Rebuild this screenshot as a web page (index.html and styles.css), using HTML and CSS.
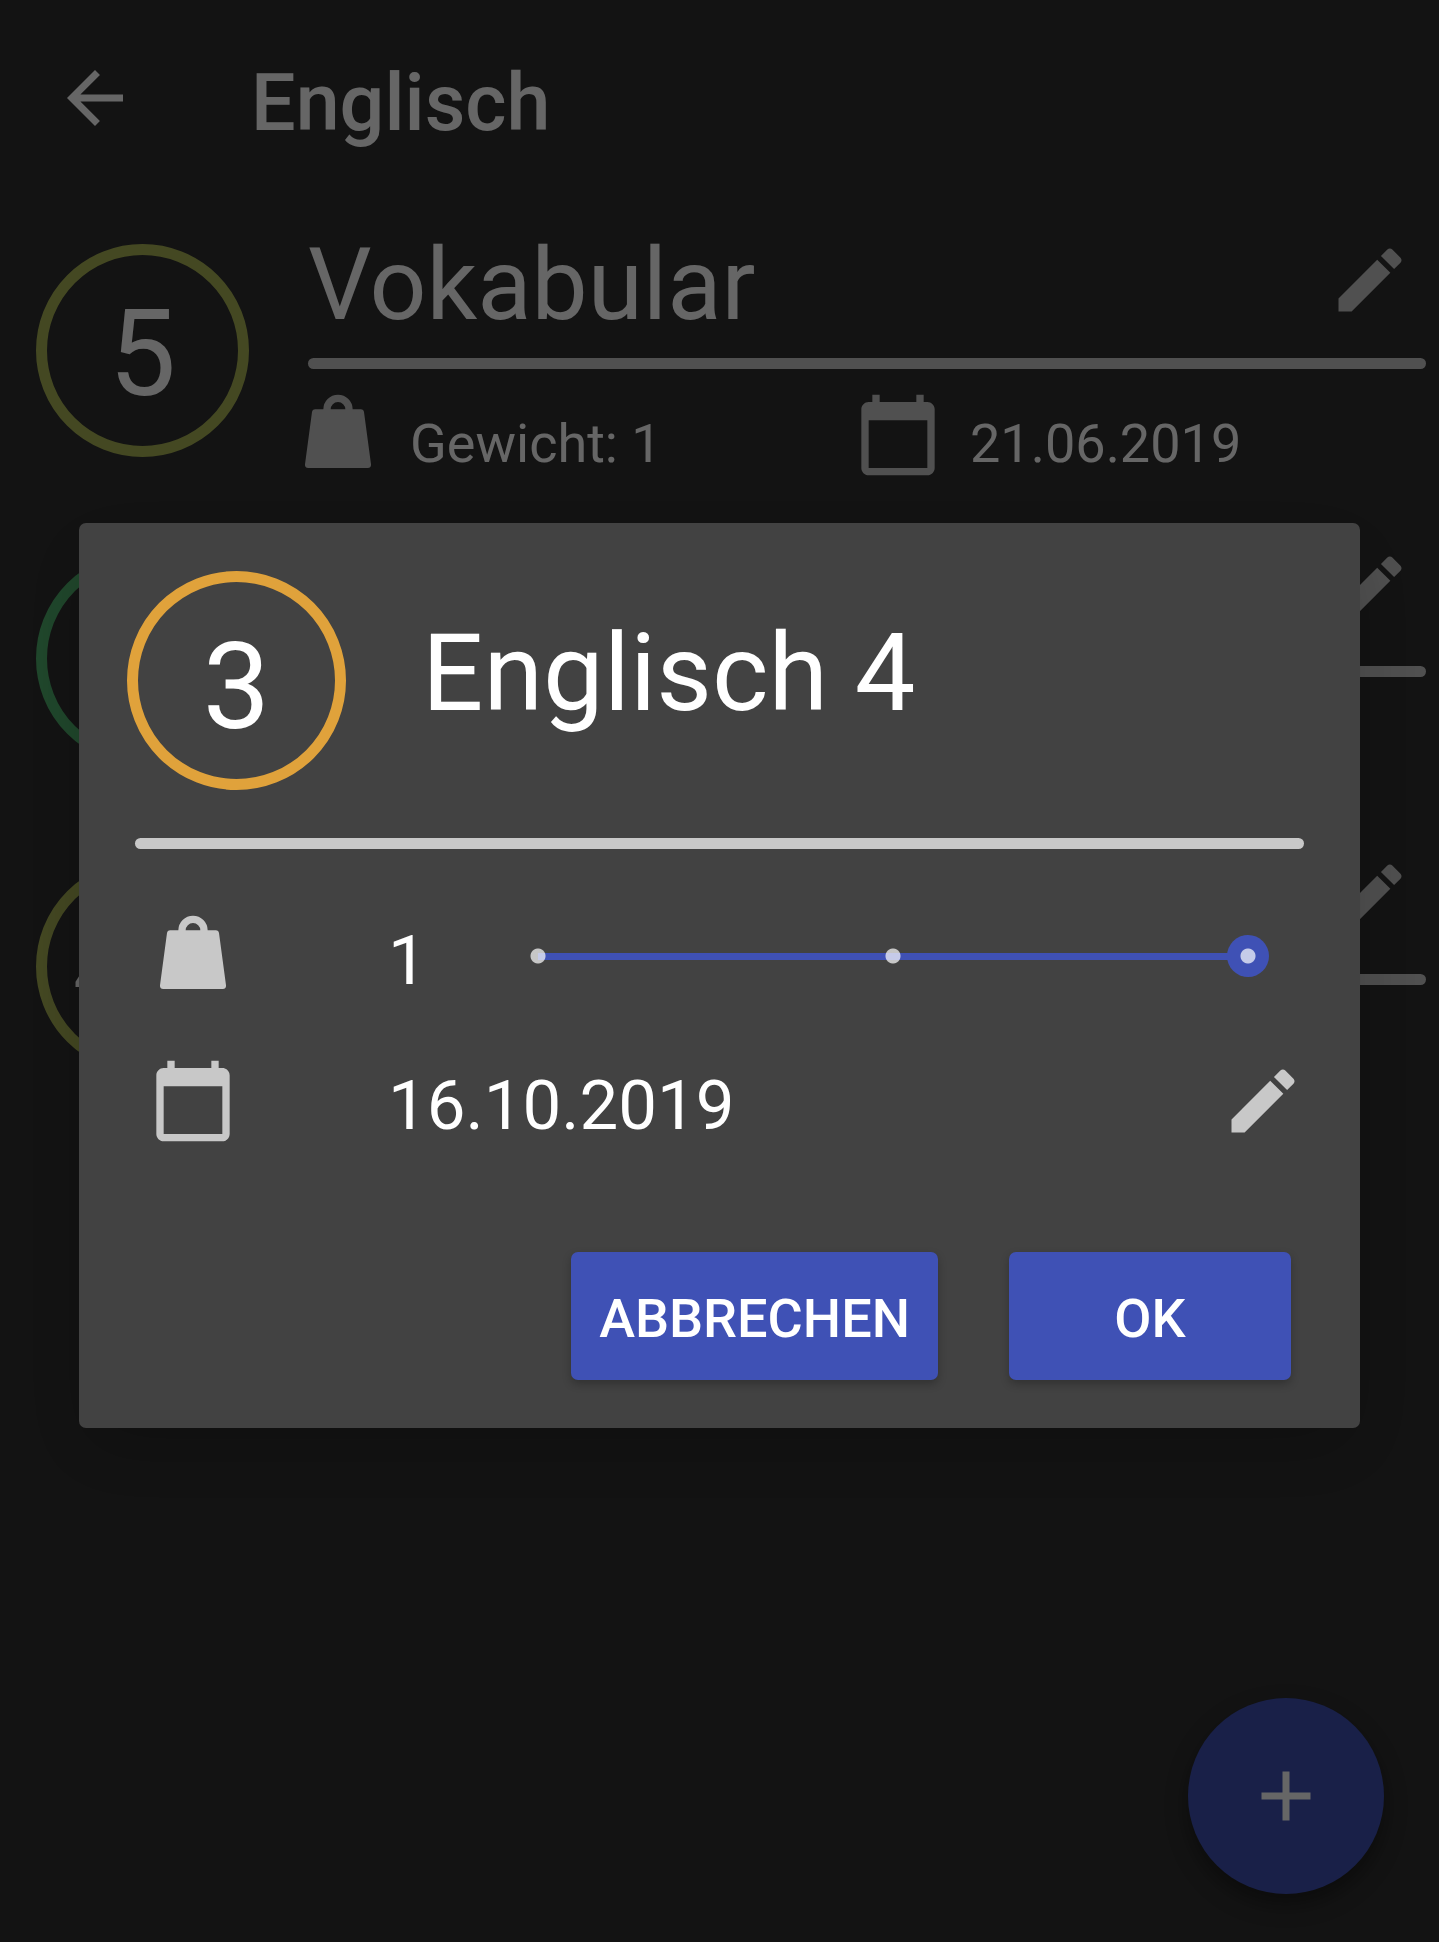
FILE: index.html
```html
<!DOCTYPE html>
<html lang="de">
<head>
<meta charset="utf-8">
<meta name="viewport" content="width=device-width, initial-scale=1">
<title>Englisch</title>
<link rel="stylesheet" href="styles.css">
</head>
<body>
<svg class="sprite" aria-hidden="true">
  <symbol id="pencil" viewBox="0 0 24 24"><path d="M3 17.25V21h3.75L17.81 9.94l-3.75-3.75L3 17.25zM20.71 7.04c.39-.39.39-1.02 0-1.41l-2.34-2.34c-.39-.39-1.02-.39-1.41 0l-1.83 1.83 3.75 3.75 1.83-1.83z"/></symbol>
  <symbol id="weight" viewBox="0 0 24 24"><path fill-rule="evenodd" d="M8 5a4 4 0 0 1 8 0h2.2q.8 0 .9.8L21 20q.1 1-.9 1H3.9Q2.900 21 3 20L4.900 5.800q.1-.8.9-.8zM10 5h4a2 2 0 0 0-4 0z"/></symbol>
  <symbol id="calendar" viewBox="0 0 24 24"><path d="M20 3h-1V1h-2v2H7V1H5v2H4c-1.100 0-2 .9-2 2v16c0 1.100.9 2 2 2h16c1.100 0 2-.9 2-2V5c0-1.100-.9-2-2-2zm0 18H4V8h16v13z"/></symbol>
</svg>

<header class="appbar">
  <button class="icon-button" type="button" aria-label="Zurück">
    <svg class="icon icon-white" viewBox="0 0 24 24"><path d="M20 11H7.830l5.590-5.590L12 4l-8 8 8 8 1.410-1.410L7.830 13H20v-2z"/></svg>
  </button>
  <h1 class="appbar-title">Englisch</h1>
</header>

<main class="grades">
  <article class="grade-row">
    <div class="grade grade-good">5</div>
    <div class="grade-body">
      <div class="grade-head">
        <h2 class="grade-title">Vokabular</h2>
        <button class="icon-button" type="button" aria-label="Bearbeiten"><svg class="icon"><use href="#pencil"/></svg></button>
      </div>
      <hr class="rule">
      <div class="grade-meta">
        <div class="meta"><svg class="icon icon-large"><use href="#weight"/></svg><span>Gewicht: 1</span></div>
        <div class="meta"><svg class="icon icon-large"><use href="#calendar"/></svg><span>21.06.2019</span></div>
      </div>
    </div>
  </article>
  <article class="grade-row">
    <div class="grade grade-top"></div>
    <div class="grade-body">
      <div class="grade-head">
        <h2 class="grade-title"></h2>
        <button class="icon-button" type="button" aria-label="Bearbeiten"><svg class="icon"><use href="#pencil"/></svg></button>
      </div>
      <hr class="rule">
    </div>
  </article>
  <article class="grade-row">
    <div class="grade grade-good grade-decimal">4.5</div>
    <div class="grade-body">
      <div class="grade-head">
        <h2 class="grade-title"></h2>
        <button class="icon-button" type="button" aria-label="Bearbeiten"><svg class="icon"><use href="#pencil"/></svg></button>
      </div>
      <hr class="rule">
    </div>
  </article>
</main>

<button class="fab" type="button" aria-label="Hinzufügen">
  <svg class="icon icon-white" viewBox="0 0 24 24"><path d="M19 13h-6v6h-2v-6H5v-2h6V5h2v6h6v2z"/></svg>
</button>

<div class="scrim">
  <form class="dialog" role="dialog" aria-labelledby="dialog-title">
    <div class="dialog-head">
      <div class="grade grade-dialog">3</div>
      <h2 class="dialog-title" id="dialog-title">Englisch 4</h2>
    </div>
    <hr class="rule dialog-rule">
    <div class="fields">
      <div class="field">
        <svg class="icon icon-large"><use href="#weight"/></svg>
        <label class="weight-value" for="weight-range">1</label>
        <input class="slider" id="weight-range" type="range" min="0" max="2" step="1" value="2">
      </div>
      <div class="field">
        <svg class="icon icon-large"><use href="#calendar"/></svg>
        <span class="date-value">16.10.2019</span>
        <button class="icon-button" type="button" aria-label="Datum ändern"><svg class="icon"><use href="#pencil"/></svg></button>
      </div>
    </div>
    <div class="actions">
      <button class="action" type="button">ABBRECHEN</button>
      <button class="action" type="button">OK</button>
    </div>
  </form>
</div>
</body>
</html>
```
FILE: styles.css
```css
:root {
  --primary: #3f51b5;
  --muted: #c8c8c8;
}

* {
  box-sizing: border-box;
}

body {
  margin: 0;
  min-height: 100vh;
  background: #303030;
  color: #fff;
  font-family: Roboto, "Liberation Sans", sans-serif;
}

h1,
h2 {
  margin: 0;
  font-weight: 400;
}

button {
  border: 0;
  padding: 0;
  color: inherit;
  font-family: inherit;
}

.sprite {
  display: none;
}

.icon {
  display: block;
  flex: none;
  width: 84px;
  height: 84px;
  fill: var(--muted);
}

.icon-large {
  width: 88px;
  height: 88px;
}

.icon-white {
  fill: #fff;
}

.icon-button {
  flex: none;
  background: none;
}

.rule {
  height: 11px;
  margin: 0;
  border: 0;
  border-radius: 6px;
  background: var(--muted);
}

.appbar {
  display: flex;
  align-items: center;
  gap: 114px;
  height: 196px;
  padding: 0 53px;
}

.appbar-title {
  padding-top: 10px;
  font-size: 79px;
  font-weight: 500;
  line-height: 90px;
}

.grade-row {
  display: flex;
  gap: 59px;
  height: 308px;
  padding: 42px 13px 0 36px;
}

.grade {
  display: flex;
  flex: none;
  align-items: center;
  justify-content: center;
  width: 213px;
  height: 213px;
  margin-top: 6px;
  padding-top: 7px;
  border: 11px solid;
  border-radius: 50%;
  color: #fff;
  font-size: 120px;
  line-height: 140px;
}

.grade-good {
  border-color: #aab456;
}

.grade-top {
  border-color: #50b26e;
}

.grade-decimal {
  font-size: 100px;
}

.grade-body {
  flex: 1;
}

.grade-head {
  display: flex;
  align-items: flex-start;
  justify-content: space-between;
  height: 120px;
  padding-right: 14px;
}

.grade-title {
  font-size: 100px;
  line-height: 94px;
}

.grade-meta {
  display: grid;
  grid-template-columns: 1fr 1fr;
  margin: 22px 12px 0 -14px;
}

.meta {
  display: flex;
  align-items: flex-end;
  gap: 28px;
  font-size: 54px;
  line-height: 70px;
}

.fab {
  position: fixed;
  right: 55px;
  bottom: 48px;
  display: grid;
  place-items: center;
  width: 196px;
  height: 196px;
  border-radius: 50%;
  background: var(--primary);
  box-shadow: 0 10px 22px rgba(0, 0, 0, 0.4);
}

.scrim {
  position: fixed;
  inset: 0;
  display: flex;
  align-items: center;
  padding: 9px 79px 0;
  background: rgba(0, 0, 0, 0.6);
}

.dialog {
  flex: 1;
  padding: 48px 0;
  border-radius: 7px;
  background: #424242;
  box-shadow: 0 24px 72px rgba(0, 0, 0, 0.2);
}

.dialog-head {
  display: flex;
  align-items: center;
  gap: 76px;
  padding: 0 48px;
}

.grade-dialog {
  width: 219px;
  height: 219px;
  margin-top: 0;
  padding-top: 12px;
  border-color: #e0a23b;
}

.dialog-title {
  padding-bottom: 16px;
  font-size: 108px;
  line-height: 126px;
}

.dialog-rule {
  margin: 48px 56px 0;
}

.fields {
  display: grid;
  gap: 57px;
  padding: 63px 55px 0 70px;
}

.field {
  display: flex;
  align-items: center;
  font-size: 69px;
  line-height: 70px;
}

.weight-value,
.date-value {
  padding: 10px 0 0;
  margin-left: 151px;
}

.weight-value {
  flex: none;
  width: 129px;
}

.date-value {
  flex: 1;
}

/* Track runs between the thumb's two end centres, with a tick on each step. */
.slider {
  flex: 1;
  min-width: 0;
  height: 42px;
  margin: 0 36px 0 0;
  appearance: none;
  background:
    radial-gradient(circle at 21px 50%, rgba(255, 255, 255, 0.7) 7px, transparent 8px),
    radial-gradient(circle at 50% 50%, rgba(255, 255, 255, 0.7) 7px, transparent 8px),
    linear-gradient(var(--primary), var(--primary)) center / calc(100% - 42px) 7px no-repeat;
}

.slider::-webkit-slider-thumb {
  appearance: none;
  width: 42px;
  height: 42px;
  border-radius: 50%;
  background: radial-gradient(circle, #c5cbe9 7px, var(--primary) 8px);
}

.slider::-moz-range-thumb {
  width: 42px;
  height: 42px;
  border: 0;
  border-radius: 50%;
  background: radial-gradient(circle, #c5cbe9 7px, var(--primary) 8px);
}

.actions {
  display: flex;
  justify-content: flex-end;
  gap: 71px;
  padding: 107px 69px 0;
}

.action {
  min-width: 282px;
  height: 128px;
  padding: 5px 28px 0;
  border-radius: 7px;
  background: var(--primary);
  box-shadow: 0 4px 8px rgba(0, 0, 0, 0.25);
  font-size: 54px;
  font-weight: 500;
}
```
